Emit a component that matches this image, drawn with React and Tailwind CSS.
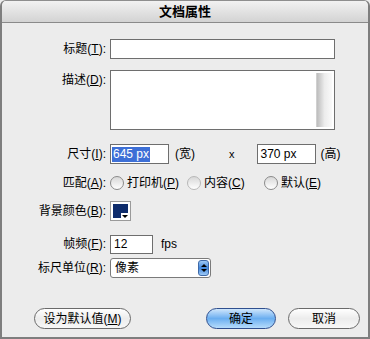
import React from "react";

const F = { fontFamily: '"Liberation Sans", "Noto Sans CJK SC", sans-serif' };

function U({ c }) {
  return <span className="underline underline-offset-[1px]">{c}</span>;
}

function Label({ t, k }) {
  return (
    <div className="text-right text-[12px] text-black leading-[20px] pr-[1px]">
      {t}(<U c={k} />):
    </div>
  );
}

function Radio({ text, k, light }) {
  return (
    <div className="flex items-center gap-[3px]">
      <div
        className={`w-[14px] h-[14px] rounded-full border ${light ? "border-[#b8b8b8]" : "border-[#8a8a8a]"} bg-gradient-to-b from-[#d8d8d8] to-white`}
      />
      <span className="text-[12px] text-black">
        {text}(<U c={k} />)
      </span>
    </div>
  );
}

export default function App() {
  return (
    <div style={F} className="w-[370px] h-[339px] bg-[#ececec] overflow-hidden">
      <div className="w-[370px] h-[339px] flex flex-col rounded-t-[6px] border border-[#8e8e8e] border-l-2 border-r-2 border-b-2 border-l-[#7e7e7e] border-r-[#7e7e7e] border-b-[#7e7e7e] overflow-hidden">
        {/* title bar */}
        <div className="h-[22px] shrink-0 flex items-center justify-center bg-gradient-to-b from-[#f2f2f2] to-[#d3d3d3] border-b border-[#8a8a8a]">
          <span className="text-[13px] font-bold text-black">文档属性</span>
        </div>

        {/* body */}
        <div className="flex-1 pt-[16px] flex flex-col">
          {/* title row */}
          <div className="grid grid-cols-[105px_1fr] gap-x-[3px] items-center h-[20px]">
            <Label t="标题" k="T" />
            <div className="w-[225px] h-[20px] bg-white border border-[#6e6e6e]" />
          </div>

          {/* description */}
          <div className="grid grid-cols-[105px_1fr] gap-x-[3px] mt-[11px]">
            <div>
              <Label t="描述" k="D" />
            </div>
            <div className="w-[225px] h-[60px] bg-white border border-[#6e6e6e] flex justify-end py-[2px] pr-[2px]">
              <div className="w-[16px] h-full bg-gradient-to-r from-[#bdbdbd] via-[#ececec] to-[#fafafa] border-l border-[#d0d0d0]" />
            </div>
          </div>

          {/* size */}
          <div className="grid grid-cols-[105px_1fr] gap-x-[3px] items-center mt-[14px] h-[20px]">
            <Label t="尺寸" k="I" />
            <div className="flex items-center text-[12px]">
              <div className="w-[59px] h-[20px] bg-white border border-[#6e6e6e] flex items-center pl-[1px]">
                <span className="bg-[#3d6fd6] text-white leading-[15px] px-[1px]">645 px</span>
              </div>
              <span className="ml-[6px]">(宽)</span>
              <span className="ml-[34px] text-[11px]">x</span>
              <div className="ml-[22px] w-[59px] h-[20px] bg-white border border-[#6e6e6e] flex items-center pl-[3px]">
                370 px
              </div>
              <span className="ml-[5px]">(高)</span>
            </div>
          </div>

          {/* match */}
          <div className="grid grid-cols-[105px_1fr] gap-x-[3px] items-center mt-[9px] h-[20px]">
            <Label t="匹配" k="A" />
            <div className="flex items-center">
              <div className="w-[77px]">
                <Radio text="打印机" k="P" />
              </div>
              <div className="w-[77px]">
                <Radio text="内容" k="C" light />
              </div>
              <div>
                <Radio text="默认" k="E" />
              </div>
            </div>
          </div>

          {/* bg color */}
          <div className="grid grid-cols-[105px_1fr] gap-x-[3px] items-center mt-[8px] h-[20px]">
            <Label t="背景颜色" k="B" />
            <div className="relative w-[21px] h-[20px] bg-white border border-[#9a9a9a] p-[2px]">
              <div className="w-full h-full bg-[#0e2c6c]" />
              <div className="absolute right-[1px] bottom-[1px] w-[8px] h-[6px] bg-white flex items-center justify-center">
                <div className="w-0 h-0 border-l-[3px] border-r-[3px] border-t-[3px] border-l-transparent border-r-transparent border-t-black" />
              </div>
            </div>
          </div>

          {/* fps */}
          <div className="grid grid-cols-[105px_1fr] gap-x-[3px] items-center mt-[13px] h-[19px]">
            <Label t="帧频" k="F" />
            <div className="flex items-center text-[12px]">
              <div className="w-[43px] h-[19px] bg-white border border-[#6e6e6e] flex items-center pl-[3px]">12</div>
              <span className="ml-[8px]">fps</span>
            </div>
          </div>

          {/* ruler */}
          <div className="grid grid-cols-[105px_1fr] gap-x-[3px] items-center mt-[5px] h-[20px]">
            <Label t="标尺单位" k="R" />
            <div className="w-[101px] h-[20px] bg-white border border-[#7a7a7a] rounded-[3px] flex items-center justify-between pl-[4px] pr-[1px] text-[12px]">
              <span>像素</span>
              <div className="w-[11px] h-[16px] rounded-[3px] bg-gradient-to-b from-[#9cc8f5] via-[#3f86db] to-[#9cc8f5] border border-[#3d69a8] flex flex-col items-center justify-center gap-[2px]">
                <div className="w-0 h-0 border-l-[3px] border-r-[3px] border-b-[3px] border-l-transparent border-r-transparent border-b-black" />
                <div className="w-0 h-0 border-l-[3px] border-r-[3px] border-t-[3px] border-l-transparent border-r-transparent border-t-black" />
              </div>
            </div>
          </div>

          {/* buttons */}
          <div className="flex items-center mt-[30px] h-[21px]">
            <div className="ml-[32px] w-[97px] h-[21px] rounded-full border border-[#6a6a6a] bg-gradient-to-b from-white via-[#ececec] to-[#f8f8f8] flex items-center justify-center text-[12px]">
              设为默认值(<U c="M" />)
            </div>
            <div className="ml-[75px] w-[70px] h-[21px] rounded-full border border-[#2f4f8f] bg-gradient-to-b from-[#cfe6fb] via-[#6aaef0] to-[#b6dcfb] flex items-center justify-center text-[12px]">
              确定
            </div>
            <div className="ml-[12px] w-[72px] h-[21px] rounded-full border border-[#6a6a6a] bg-gradient-to-b from-white via-[#ececec] to-[#f8f8f8] flex items-center justify-center text-[12px]">
              取消
            </div>
          </div>
        </div>
      </div>
    </div>
  );
}
